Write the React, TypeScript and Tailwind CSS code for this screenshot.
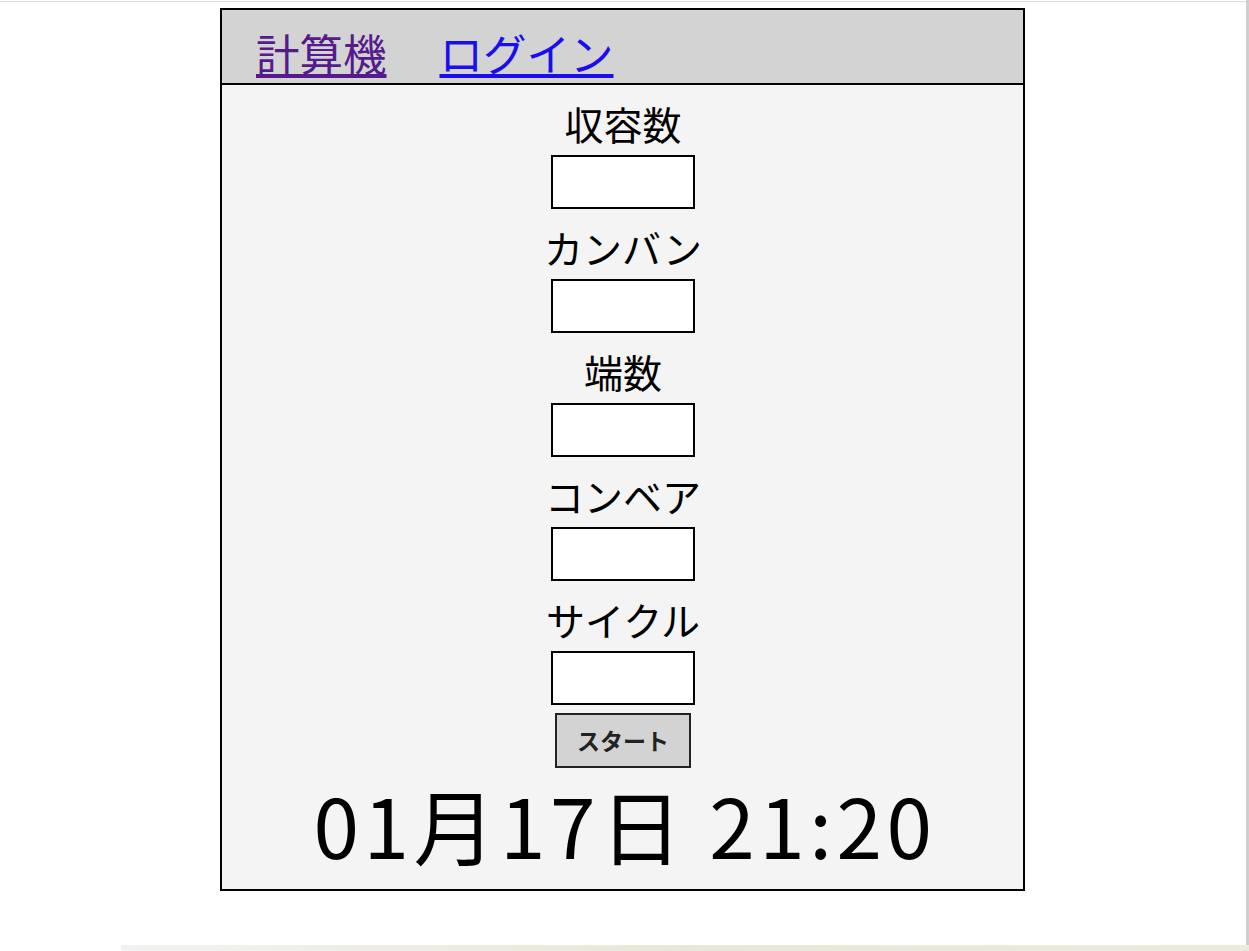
import React from "react";

const jp = { fontFamily: '"Noto Sans CJK JP", "Noto Sans", sans-serif' };

function Field({ label }: { label: string }) {
  return (
    <div className="w-[200px] flex flex-col items-center">
      <div className="h-[70px] flex items-center justify-center text-[39px] leading-none text-black pt-[6px] whitespace-nowrap">
        {label}
      </div>
      <input
        type="text"
        className="w-[144px] h-[54px] border-2 border-black bg-white outline-none"
      />
    </div>
  );
}

export default function App() {
  return (
    <div className="w-[1249px] h-[951px] bg-white flex flex-col overflow-hidden" style={jp}>
      <div className="flex-1 flex">
        <div className="flex-1 flex flex-col">
          <div className="h-[1px] mt-[1px] bg-[#dcdcdc]" />
          <div className="mt-[6px] ml-[220px] w-[805px] border-2 border-black flex flex-col">
            <div className="h-[75px] bg-[#d3d3d3] border-b-2 border-black flex items-end pl-[34px] pb-[2px] gap-[53px] text-[43.5px] leading-[56px]">
              <a href="#" className="text-[#551a8b] underline">計算機</a>
              <a href="#" className="text-[#1a0dee] underline">ログイン</a>
            </div>
            <div className="bg-[#f4f4f4] flex flex-col items-center pl-[1px]">
              <Field label="収容数" />
              <Field label="カンバン" />
              <Field label="端数" />
              <Field label="コンベア" />
              <Field label="サイクル" />
              <button className="mt-[8px] w-[136px] h-[55px] border-2 border-[#222] bg-[#d3d3d3] text-[23px] font-bold text-[#222]">
                スタート
              </button>
              <div className="h-[121px] flex items-center text-[82px] leading-none tracking-[4.5px] text-black pl-[4px] pb-[10px] whitespace-nowrap">
                01月17日 21:20
              </div>
            </div>
          </div>
        </div>
        <div className="w-[3px] bg-[#cfcfcf]" />
      </div>
      <div className="h-[6px] flex">
        <div className="w-[121px] bg-white" />
        <div className="flex-1 bg-gradient-to-r from-[#f2f2f2] via-[#e8e8d8] to-[#ecebe0]" />
      </div>
    </div>
  );
}
